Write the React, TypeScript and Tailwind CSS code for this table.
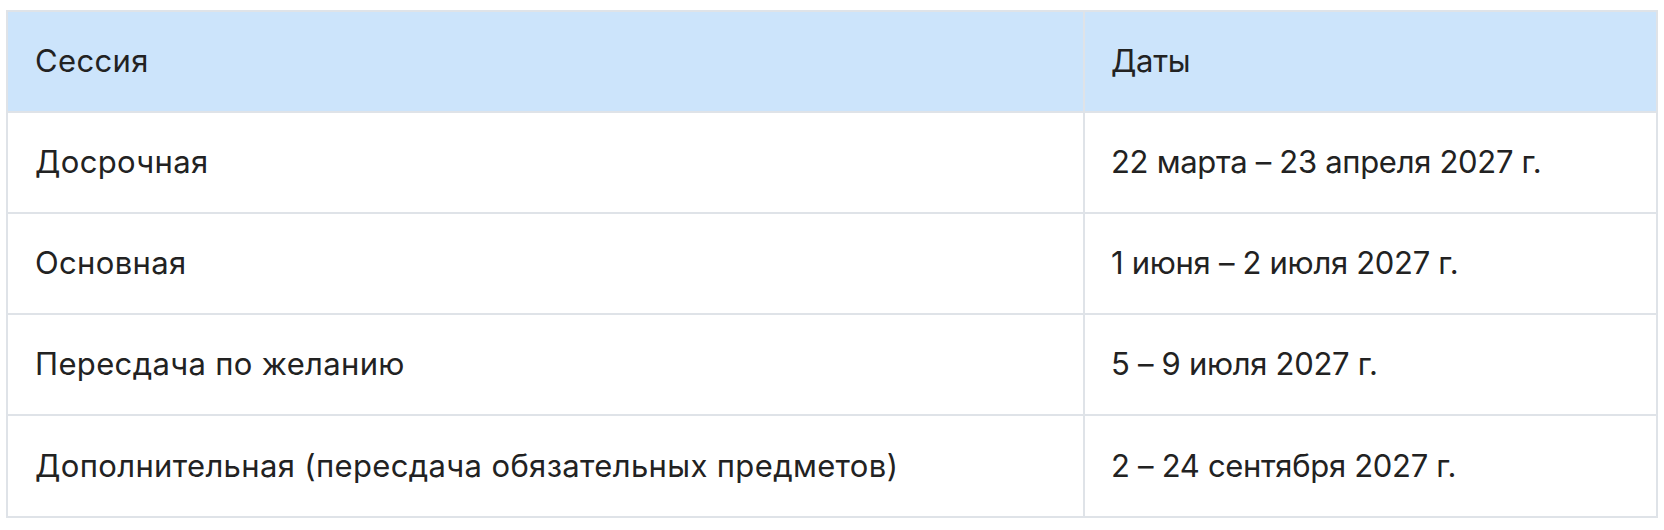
import React from "react";

const rows: [string, string][] = [
  ["Досрочная", "22 марта – 23 апреля 2027 г."],
  ["Основная", "1 июня – 2 июля 2027 г."],
  ["Пересдача по желанию", "5 – 9 июля 2027 г."],
  ["Дополнительная (пересдача обязательных предметов)", "2 – 24 сентября 2027 г."],
];

export default function App() {
  return (
    <div className="w-[1664px] h-[530px] bg-white pt-[10px] px-[6px] font-['Inter',sans-serif] text-[#222222]">
      <div className="w-[1652px] border-2 border-[#dfe3e8]">
        <div className="flex h-[101px] bg-[#cce4fb] border-b-2 border-[#dfe3e8]">
          <div className="w-[1077px] border-r-2 border-[#dfe3e8] pl-[27px] flex items-center text-[31px] tracking-[0.35px]">Сессия</div>
          <div className="flex-1 pl-[26px] flex items-center text-[31px] tracking-[-0.3px]">Даты</div>
        </div>
        {rows.map(([a, b], i) => (
          <div
            key={i}
            className={
              i < rows.length - 1
                ? "flex h-[101px] bg-white border-b-2 border-[#dfe3e8]"
                : "flex h-[100px] bg-white"
            }
          >
            <div className="w-[1077px] border-r-2 border-[#dfe3e8] pl-[27px] flex items-center text-[31px] tracking-[0.35px]">{a}</div>
            <div className="flex-1 pl-[26px] flex items-center text-[31px] tracking-[-0.3px]">{b}</div>
          </div>
        ))}
      </div>
    </div>
  );
}
